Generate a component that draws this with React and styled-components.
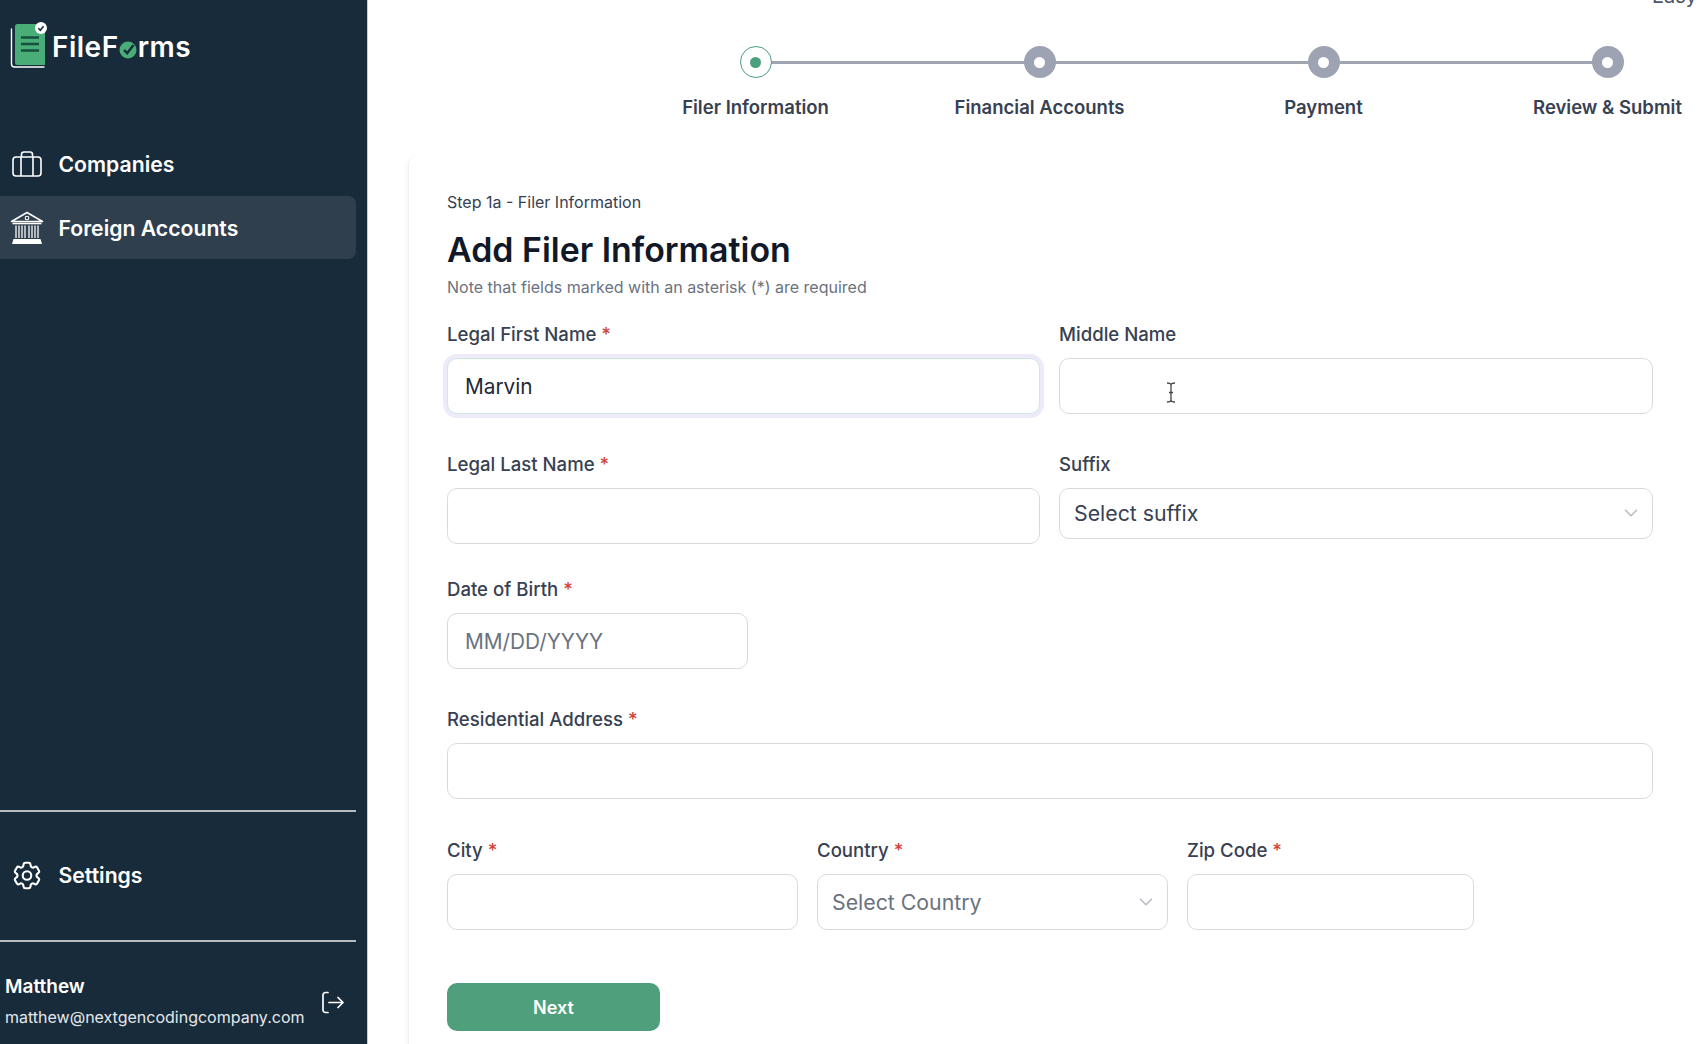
import React from 'react'
import styled, {createGlobalStyle} from 'styled-components'
import {ChevronDown} from 'lucide-react'
import {HiOutlineCog6Tooth} from 'react-icons/hi2'

const GlobalStyle = createGlobalStyle`
    html, body {
        margin: 0;
        height: 100%;
        overflow: hidden;
        background: #FFFFFF;
    }
    * { box-sizing: border-box; }
    body {
        font-family: Inter, "Liberation Sans", sans-serif;
        color: #1F2937;
    }
`;

const Page = styled.div`
    display: flex;
    width: 1698px;
    height: 1044px;
    overflow: hidden;
`;

const Sidebar = styled.aside`
    width: 368px;
    flex-shrink: 0;
    height: 100%;
    display: flex;
    flex-direction: column;
    background: #182B3A;
    border-right: 1px solid #C9CED2;
    color: #FFFFFF;
`;

const Logo = styled.div`
    display: flex;
    align-items: center;
    gap: 4px;
    height: 46px;
    margin: 22px 0 63px 10px;
`;

const LogoText = styled.span`
    display: inline-flex;
    align-items: center;
    margin-top: 4px;
    font-size: 28px;
    font-weight: 600;
    letter-spacing: 0.5px;
`;

const NavItem = styled.div`
    display: flex;
    align-items: center;
    width: 356px;
    height: ${p => p.$height}px;
    padding: 0 0 ${p => p.$height > 100 ? 2 : 0}px 10px;
    border-radius: 0 8px 8px 0;
    background: ${p => p.$active ? '#2F3F4E' : 'transparent'};
`;

const NavIcon = styled.span`
    display: flex;
    justify-content: center;
    align-items: center;
    width: 34px;
    margin-right: 14.5px;
`;

const NavLabel = styled.span`
    font-size: 21.2px;
    font-weight: 600;
`;

const Spacer = styled.div`
    flex: 1;
`;

const Divider = styled.div`
    width: 356px;
    height: 2px;
    background: #B5BCC2;
`;

const UserRow = styled.div`
    display: flex;
    align-items: center;
    justify-content: space-between;
    width: 356px;
    height: 102px;
    padding: 18px 12px 0 5px;
`;

const UserName = styled.div`
    font-size: 19px;
    font-weight: 600;
    line-height: 24px;
    margin-bottom: 6px;
`;

const UserEmail = styled.div`
    font-size: 16px;
    line-height: 24px;
    color: #E4E8EB;
`;

const Main = styled.main`
    position: relative;
    flex: 1;
    min-width: 0;
    overflow: hidden;
`;

const Clipped = styled.span`
    position: absolute;
    top: -16px;
    left: 1284px;
    font-size: 20px;
    line-height: 24px;
    color: #4B5563;
`;

const Stepper = styled.ol`
    display: grid;
    grid-template-columns: repeat(4, 284px);
    height: 155px;
    margin: 0 0 0 245.5px;
    padding: 46px 0 0;
    list-style: none;
`;

const Step = styled.li`
    position: relative;
    display: flex;
    flex-direction: column;
    align-items: center;
    gap: 16px;

    &:not(:last-child)::after {
        content: '';
        position: absolute;
        top: 15px;
        left: 50%;
        width: 100%;
        height: 3px;
        background: #9FA6B2;
    }
`;

const StepDot = styled.span`
    position: relative;
    z-index: 1;
    display: flex;
    align-items: center;
    justify-content: center;
    width: 32px;
    height: 32px;
    border-radius: 50%;
    background: ${p => p.$active ? '#FFFFFF' : '#9EA3B3'};
    border: ${p => p.$active ? '1.5px solid #4C9F7D' : 'none'};

    &::after {
        content: '';
        width: 11px;
        height: 11px;
        border-radius: 50%;
        background: ${p => p.$active ? '#4C9F7D' : '#FFFFFF'};
    }
`;

const StepLabel = styled.span`
    font-size: 18.5px;
    font-weight: 600;
    line-height: 26px;
    white-space: nowrap;
    color: #374151;
`;

const Card = styled.section`
    height: 889px;
    margin-left: 40px;
    padding: 36px 45px 0 38px;
    border-left: 1px solid #F1F1F2;
    border-top-left-radius: 10px;
    box-shadow: -2px 3px 4px rgba(0, 0, 0, 0.04);
`;

const StepCaption = styled.div`
    font-size: 16px;
    line-height: 22px;
    color: #374151;
`;

const Title = styled.h1`
    margin: 15px 0 0;
    font-size: 33.9px;
    font-weight: 600;
    line-height: 44px;
    color: #111827;
`;

const Note = styled.p`
    margin: 4px 0 0;
    font-size: 16px;
    line-height: 22px;
    color: #6B7280;
`;

const Row = styled.div`
    display: grid;
    grid-template-columns: ${p => p.$columns};
    gap: 19px;
    align-items: start;
    margin-top: ${p => p.$top}px;
`;

const Field = styled.div`
    display: flex;
    flex-direction: column;
    gap: 12px;
`;

const Label = styled.label`
    font-size: 18.6px;
    font-weight: 500;
    line-height: 24px;
    color: #374151;
`;

const Required = styled.span`
    color: #D0443A;
`;

const Input = styled.input`
    width: 100%;
    height: 56px;
    padding: 0 17px;
    font-family: inherit;
    font-size: 20.8px;
    color: #1F2937;
    background: #FFFFFF;
    border: 1.5px solid ${p => p.$focused ? '#CFE7E2' : '#D8DAE0'};
    border-radius: 10px;
    outline: none;
    box-shadow: ${p => p.$focused ? '0 0 0 4px #EEEAFA' : 'none'};

    &::placeholder {
        color: #6B7280;
    }
`;

const InputWrap = styled.div`
    position: relative;
`;

const TextCursor = styled.svg`
    position: absolute;
    top: 24px;
    left: 107px;
`;

const SelectBox = styled.div`
    display: flex;
    align-items: center;
    justify-content: space-between;
    width: 100%;
    height: ${p => p.$height}px;
    padding: 0 10px 1px 14px;
    font-size: 21.3px;
    color: ${p => p.$muted ? '#6B7280' : '#374151'};
    border: 1.5px solid #D8DAE0;
    border-radius: 10px;
`;

const NextButton = styled.button`
    display: block;
    width: 213px;
    height: 48px;
    margin-top: 53px;
    font-family: inherit;
    font-size: 18px;
    font-weight: 600;
    color: #FFFFFF;
    background: #4F9F7C;
    border: none;
    border-radius: 10px;
`;

function LogoMark() {
    return (
        <svg width="38" height="46" viewBox="0 0 38 46" fill="none">
            <path d="M1.5 7V42a3 3 0 0 0 3 3H34" stroke="#FFFFFF" strokeWidth="1.4" strokeLinecap="round" />
            <path d="M5 4.5a2.5 2.5 0 0 1 2.5-2.5H26L35 9V43H7.5A2.5 2.5 0 0 1 5 40.5Z" fill="#49AD78" />
            <path d="M11 15.5H29M11 22H29M11 28.5H29" stroke="#17503C" strokeWidth="2.4" />
            <circle cx="31" cy="6" r="6" fill="#FFFFFF" />
            <path d="M28.3 6.2l2 2 3.2-4" stroke="#182B3A" strokeWidth="1.6" fill="none" />
        </svg>
    )
}

function LogoO() {
    return (
        <svg width="19" height="19" viewBox="0 0 19 19" style={{margin: '5px 0 0'}}>
            <circle cx="9" cy="10" r="8.5" fill="#49AD78" />
            <path d="M5 10l3.2 3.2L14.5 5" stroke="#182B3A" strokeWidth="2.4" fill="none" />
        </svg>
    )
}

function BriefcaseIcon() {
    return (
        <svg width="30" height="26" viewBox="0 0 30 26" fill="none" stroke="#FFFFFF" strokeWidth="1.6">
            <rect x="1" y="6" width="28" height="19" rx="3" />
            <path d="M9 6V25M21 6V25M9.5 6V3.5A2.5 2.5 0 0 1 12 1h6a2.5 2.5 0 0 1 2.5 2.5V6" />
        </svg>
    )
}

function BankIcon() {
    return (
        <svg width="34" height="34" viewBox="0 0 34 34" fill="none">
            <path d="M17 1.5 32.5 10.5H1.5Z" stroke="#FFFFFF" strokeWidth="1.5" strokeLinejoin="round" />
            <circle cx="17" cy="7" r="1.8" stroke="#FFFFFF" strokeWidth="1.1" />
            <path d="M2.5 12.5h29" stroke="#FFFFFF" strokeWidth="1.6" />
            <path d="M6 14.5v12.5M9 14.5v12.5M12 14.5v12.5M15 14.5v12.5M19 14.5v12.5M22 14.5v12.5M25 14.5v12.5M28 14.5v12.5" stroke="#E8EBED" strokeWidth="1.4" />
            <path d="M3.5 28h27l1.5 5H2Z" fill="#FFFFFF" />
        </svg>
    )
}

function LogoutIcon() {
    return (
        <svg width="23" height="23" viewBox="0 0 23 23" fill="none" stroke="#FFFFFF" strokeWidth="1.7" strokeLinecap="round" strokeLinejoin="round">
            <path d="M7 1.5H4.5A2.5 2.5 0 0 0 2 4v15a2.5 2.5 0 0 0 2.5 2.5H7" />
            <path d="M8 11.5h14M17 6.5l5 5-5 5" />
        </svg>
    )
}

function FieldLabel({children, required}) {
    return <Label>{children}{required && <Required> *</Required>}</Label>
}

const steps = ['Filer Information', 'Financial Accounts', 'Payment', 'Review & Submit']

function App() {
    return (
        <Page>
            <GlobalStyle />
            <Sidebar>
                <Logo>
                    <LogoMark />
                    <LogoText>FileF<LogoO />rms</LogoText>
                </Logo>
                <NavItem $height={65}>
                    <NavIcon><BriefcaseIcon /></NavIcon>
                    <NavLabel>Companies</NavLabel>
                </NavItem>
                <NavItem $active $height={63}>
                    <NavIcon><BankIcon /></NavIcon>
                    <NavLabel>Foreign Accounts</NavLabel>
                </NavItem>
                <Spacer />
                <Divider />
                <NavItem $height={128}>
                    <NavIcon><HiOutlineCog6Tooth size={35} color="#FFFFFF" /></NavIcon>
                    <NavLabel>Settings</NavLabel>
                </NavItem>
                <Divider />
                <UserRow>
                    <div>
                        <UserName>Matthew</UserName>
                        <UserEmail>matthew@nextgencodingcompany.com</UserEmail>
                    </div>
                    <LogoutIcon />
                </UserRow>
            </Sidebar>

            <Main>
                <Clipped>Easy</Clipped>
                <Stepper>
                    {steps.map((step, i) => (
                        <Step key={step}>
                            <StepDot $active={i === 0} />
                            <StepLabel>{step}</StepLabel>
                        </Step>
                    ))}
                </Stepper>

                <Card>
                    <StepCaption>Step 1a - Filer Information</StepCaption>
                    <Title>Add Filer Information</Title>
                    <Note>Note that fields marked with an asterisk (*) are required</Note>

                    <Row $columns="593px 594px" $top={24}>
                        <Field>
                            <FieldLabel required>Legal First Name</FieldLabel>
                            <Input $focused defaultValue="Marvin" />
                        </Field>
                        <Field>
                            <FieldLabel>Middle Name</FieldLabel>
                            <InputWrap>
                                <Input />
                                <TextCursor width="10" height="21" viewBox="0 0 10 21" fill="none" stroke="#444444" strokeWidth="1.3">
                                    <path d="M1 1c2 0 4 .5 4 2v15c0 1.5-2 2-4 2M9 1c-2 0-4 .5-4 2v15c0 1.5 2 2 4 2M3 10.5h4" />
                                </TextCursor>
                            </InputWrap>
                        </Field>
                    </Row>

                    <Row $columns="593px 594px" $top={38}>
                        <Field>
                            <FieldLabel required>Legal Last Name</FieldLabel>
                            <Input />
                        </Field>
                        <Field>
                            <FieldLabel>Suffix</FieldLabel>
                            <SelectBox $height={51}>
                                Select suffix
                                <ChevronDown size={22} strokeWidth={1.8} color="#B8BDC5" />
                            </SelectBox>
                        </Field>
                    </Row>

                    <Row $columns="301px" $top={33}>
                        <Field>
                            <FieldLabel required>Date of Birth</FieldLabel>
                            <Input placeholder="MM/DD/YYYY" />
                        </Field>
                    </Row>

                    <Row $columns="1206px" $top={38}>
                        <Field>
                            <FieldLabel required>Residential Address</FieldLabel>
                            <Input />
                        </Field>
                    </Row>

                    <Row $columns="351px 351px 287px" $top={39}>
                        <Field>
                            <FieldLabel required>City</FieldLabel>
                            <Input />
                        </Field>
                        <Field>
                            <FieldLabel required>Country</FieldLabel>
                            <SelectBox $height={56} $muted>
                                Select Country
                                <ChevronDown size={22} strokeWidth={1.8} color="#B8BDC5" />
                            </SelectBox>
                        </Field>
                        <Field>
                            <FieldLabel required>Zip Code</FieldLabel>
                            <Input />
                        </Field>
                    </Row>

                    <NextButton>Next</NextButton>
                </Card>
            </Main>
        </Page>
    )
}

export default App;
